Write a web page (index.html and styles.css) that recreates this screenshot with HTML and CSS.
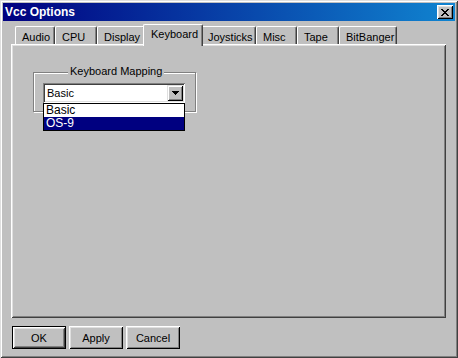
FILE: index.html
```html
<!DOCTYPE html>
<html lang="en">

<head>
    <meta charset="UTF-8">
    <title>Vcc Options</title>
    <link rel="stylesheet" href="styles.css">
</head>

<body>
    <div class="window">
        <div class="titlebar">
            <span class="title">Vcc Options</span>
            <div class="close-btn">
                <svg width="8" height="7" viewBox="0 0 8 7" shape-rendering="crispEdges">
                    <path fill="#000" d="M0 0h2v1H0zM6 0h2v1H6zM1 1h2v1H1zM5 1h2v1H5zM2 2h4v1H2zM3 3h2v1H3zM2 4h4v1H2zM1 5h2v1H1zM5 5h2v1H5zM0 6h2v1H0zM6 6h2v1H6z"/>
                </svg>
            </div>
        </div>

        <div class="dialog-body">
            <div class="tabs">
                <div class="tab tab-audio">Audio</div>
                <div class="tab tab-cpu">CPU</div>
                <div class="tab tab-display">Display</div>
                <div class="tab tab-keyboard active">Keyboard</div>
                <div class="tab tab-joysticks">Joysticks</div>
                <div class="tab tab-misc">Misc</div>
                <div class="tab tab-tape">Tape</div>
                <div class="tab tab-bitbanger">BitBanger</div>
            </div>

            <div class="tab-panel">
                <div class="groupbox">
                    <span class="group-label">Keyboard Mapping</span>
                    <div class="combo">
                        <div class="combo-field">Basic</div>
                        <div class="combo-btn">
                            <svg width="7" height="4" viewBox="0 0 7 4" shape-rendering="crispEdges">
                                <path fill="#000" d="M0 0h7v1H0zM1 1h5v1H1zM2 2h3v1H2zM3 3h1v1H3z"/>
                            </svg>
                        </div>
                        <ul class="combo-list">
                            <li>Basic</li>
                            <li class="selected">OS-9</li>
                        </ul>
                    </div>
                </div>
            </div>

            <div class="buttons">
                <button class="btn default">OK</button>
                <button class="btn">Apply</button>
                <button class="btn">Cancel</button>
            </div>
        </div>
    </div>
</body>

</html>
```

FILE: styles.css
```css
body {
    margin: 0;
    background: #c0c0c0;
    font-family: "Liberation Sans", Arial, sans-serif;
    font-size: 11px;
    color: #000;
}

.window {
    width: 458px;
    height: 358px;
    box-sizing: border-box;
    padding: 3px;
    background: #c0c0c0;
    box-shadow: inset 1px 1px #dfdfdf, inset -1px -1px #404040,
        inset 2px 2px #fff, inset -2px -2px #808080;
}

/* title bar */
.titlebar {
    height: 18px;
    display: flex;
    align-items: center;
    justify-content: space-between;
    padding: 0 2px;
    background: linear-gradient(to right, #000080, #1084d0);
}

.title {
    color: #fff;
    font-weight: bold;
    font-size: 12px;
}

.close-btn {
    width: 16px;
    height: 14px;
    box-sizing: border-box;
    display: flex;
    align-items: center;
    justify-content: center;
    background: #c0c0c0;
    box-shadow: inset 1px 1px #fff, inset -1px -1px #000,
        inset 2px 2px #dfdfdf, inset -2px -2px #808080;
}

.dialog-body {
    padding: 3px 9px 0 8px;
}

/* tabs */
.tabs {
    display: flex;
    align-items: flex-end;
    height: 20px;
    padding-left: 4px;
}

.tab {
    height: 18px;
    box-sizing: border-box;
    padding: 4px 0 0 6px;
    background: #c0c0c0;
    border-top: 1px solid #fff;
    border-left: 1px solid #fff;
    border-right: 1px solid #404040;
    border-radius: 2px 2px 0 0;
    box-shadow: inset -1px 0 #808080;
    white-space: nowrap;
}

.tab-audio { width: 40px; }
.tab-cpu { width: 42px; }
.tab-display { width: 48px; }
.tab-keyboard { width: 56px; }
.tab-joysticks { width: 55px; }
.tab-misc { width: 41px; }
.tab-tape { width: 42px; }
.tab-bitbanger { width: 58px; }

.tab.active {
    position: relative;
    z-index: 1;
    width: 60px;
    height: 22px;
    margin: 0 -2px -2px -2px;
    padding-top: 3px;
    padding-left: 7px;
}

.tab-panel {
    width: 435px;
    height: 274px;
    box-sizing: border-box;
    padding: 28px 0 0 22px;
    box-shadow: inset 1px 1px #fff, inset -1px -1px #404040,
        inset 2px 2px #dfdfdf, inset -2px -2px #808080;
}

/* group box */
.groupbox {
    position: relative;
    width: 163px;
    height: 40px;
    box-sizing: border-box;
    border: 1px solid #808080;
    box-shadow: inset 1px 1px #fff, 1px 1px #fff;
    padding: 10px 0 0 9px;
}

.group-label {
    position: absolute;
    top: -8px;
    left: 34px;
    padding: 0 2px;
    line-height: 13px;
    background: #c0c0c0;
}

/* combo box */
.combo {
    position: relative;
    width: 142px;
    height: 20px;
    box-sizing: border-box;
    display: flex;
    align-items: center;
    justify-content: space-between;
    padding: 2px;
    background: #fff;
    box-shadow: inset 1px 1px #808080, inset -1px -1px #fff,
        inset 2px 2px #404040, inset -2px -2px #dfdfdf;
}

.combo-field {
    padding-left: 2px;
}

.combo-btn {
    width: 16px;
    height: 16px;
    box-sizing: border-box;
    display: flex;
    align-items: center;
    justify-content: center;
    background: #c0c0c0;
    box-shadow: inset 1px 1px #dfdfdf, inset -1px -1px #000,
        inset 2px 2px #fff, inset -2px -2px #808080;
}

.combo-list {
    position: absolute;
    top: 100%;
    left: 0;
    width: 142px;
    box-sizing: border-box;
    margin: 0;
    padding: 0;
    list-style: none;
    background: #fff;
    border: 1px solid #000;
    z-index: 2;
}

.combo-list li {
    height: 13px;
    line-height: 13px;
    padding-left: 2px;
    font-size: 12px;
}

.combo-list li.selected {
    background: #000080;
    color: #fff;
}

/* buttons */
.buttons {
    display: flex;
    gap: 3px;
    margin-top: 8px;
    padding-left: 1px;
}

.btn {
    width: 54px;
    height: 23px;
    box-sizing: border-box;
    border: none;
    padding: 0;
    background: #c0c0c0;
    font-family: inherit;
    font-size: 11px;
    color: #000;
    box-shadow: inset 1px 1px #fff, inset -1px -1px #000,
        inset 2px 2px #dfdfdf, inset -2px -2px #808080;
}

.btn.default {
    border: 1px solid #000;
    box-shadow: inset 1px 1px #fff, inset -1px -1px #404040,
        inset 2px 2px #dfdfdf, inset -2px -2px #808080;
}
```
